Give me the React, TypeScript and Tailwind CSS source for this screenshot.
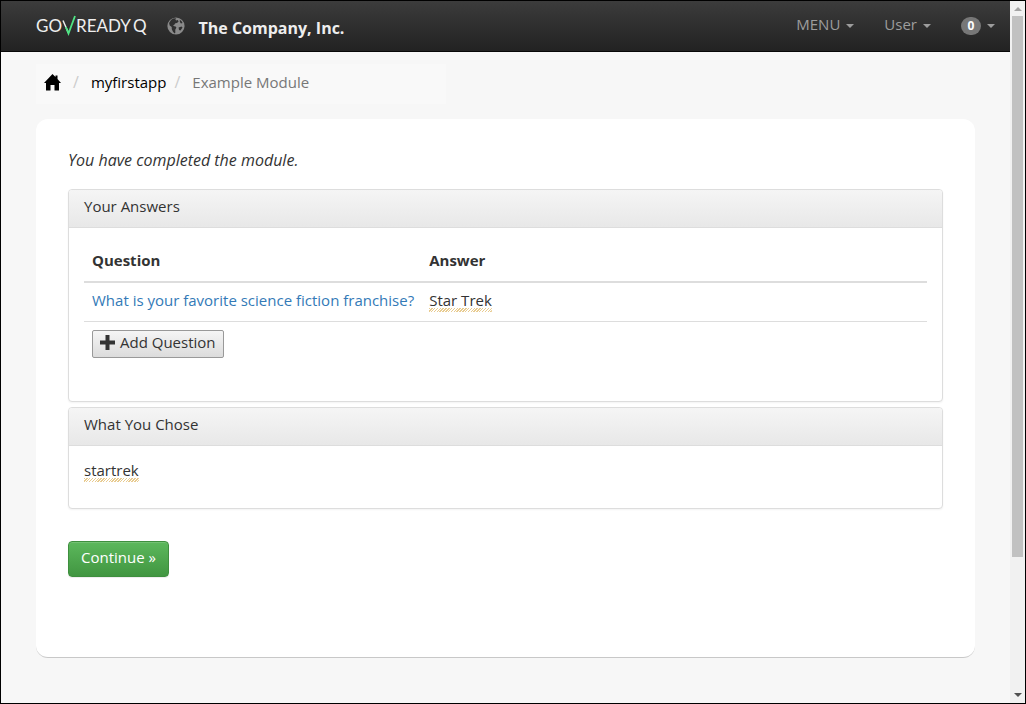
import type { ReactNode } from "react";

const hatch =
  "pb-0.5 bg-[repeating-linear-gradient(135deg,#e8cb90_0px,#e8cb90_1px,#ffffff_1px,#ffffff_2px)] bg-[length:100%_4px] bg-bottom bg-no-repeat";

function Caret() {
  return (
    <span
      aria-hidden="true"
      className="ml-1.5 h-0 w-0 border-x-4 border-t-4 border-x-transparent border-t-[#9d9d9d]"
    />
  );
}

function Logo() {
  return (
    <span className="flex items-center font-[Lato] text-[17px] leading-5 text-[#eeeeee]">
      GO
      <svg width="15" height="22" viewBox="0 0 15 22" fill="none" className="-mr-px" aria-label="V">
        <path d="M1 5.500 6.500 18" stroke="#eeeeee" strokeWidth="1.500" />
        <path d="M3.800 12 6.500 18.500 13 1" stroke="#4fe584" strokeWidth="1.800" />
      </svg>
      READY<span className="ml-0.5">Q</span>
    </span>
  );
}

function Globe() {
  return (
    <svg width="18" height="18" viewBox="0 0 18 18" aria-hidden="true">
      <circle cx="9" cy="9" r="8.6" fill="#8a8a8a" />
      <path
        d="M6.200 1.500 9.300 1.300 8.300 2.500 9.200 3.500 10.800 3 11.600 4.600 10 6 8.300 6.200 7.300 7.700 6 8.300 7.300 9.200 8.600 9.400 9.400 10.600 8.300 12.800 8.300 15.800 7.600 16.400 6 14.800 4.800 12.200 4.700 10 2.700 8.600 2.100 6 4 3Z M12.800 2.700 14.400 4 15.600 6 14 6.600 12.900 5Z M11.600 10.500 14.500 9.600 15.500 10.500 13.500 13.500 12 13Z"
        fill="#2f2f2f"
      />
    </svg>
  );
}

function Home() {
  return (
    <svg width="17" height="17" viewBox="0 0 17 17" aria-hidden="true">
      <path d="M8.500 0 11.500 3V1.500h2V5L17 9h-2v7.500h-4.500V11h-4v5.500H2V9H0Z" fill="#000000" />
    </svg>
  );
}

function Plus() {
  return (
    <svg width="15" height="15" viewBox="0 0 15 15" aria-hidden="true">
      <path d="M5.500 0h4v5.500H15v4H9.500V15h-4V9.500H0v-4h5.500Z" fill="#333333" />
    </svg>
  );
}

function Panel({ title, children }: { title: string; children: ReactNode }) {
  return (
    <section className="overflow-hidden rounded border border-[#dddddd] bg-white shadow-[0_1px_2px_rgba(0,0,0,0.05)]">
      <h2 className="border-b border-[#dddddd] bg-linear-to-b from-[#f5f5f5] to-[#e8e8e8] px-[15px] pt-1.5 pb-2.5 leading-[21px]">
        {title}
      </h2>
      {children}
    </section>
  );
}

export default function App() {
  return (
    <div className="flex h-screen overflow-hidden border border-black bg-[#f7f7f7] font-['Open_Sans',sans-serif] text-[15px] text-[#333333]">
      <div className="min-w-0 flex-1">
        <header className="flex h-[51px] items-center border-b border-[#080808] bg-linear-to-b from-[#3c3c3c] to-[#222222] pl-[35px]">
          <a href="#home" className="flex items-center">
            <Logo />
          </a>
          <a href="#company" className="ml-5 flex items-center gap-3.5 text-base font-bold text-[#eeeeee]">
            <Globe />
            <span className="pt-1">The Company, Inc.</span>
          </a>
          <nav className="ml-auto flex text-[#9d9d9d]">
            <button className="flex items-center px-[15px]">
              <span className="pb-1">MENU</span>
              <Caret />
            </button>
            <button className="flex items-center px-[15px]">
              <span className="pb-1">User</span>
              <Caret />
            </button>
            <button className="flex items-center px-[15px]" aria-label="Notifications">
              <span className="flex h-[18px] w-5 items-center justify-center rounded-full bg-[#777777] text-xs font-bold text-white">
                0
              </span>
              <Caret />
            </button>
          </nav>
        </header>

        <main className="px-[35px] pt-3">
          <nav aria-label="Breadcrumb" className="max-w-[410px] bg-[#f9f9f9]">
            <ol className="flex h-10 items-center gap-3 px-2 pb-1">
              <li>
                <a href="#home" aria-label="Home">
                  <Home />
                </a>
              </li>
              <li aria-hidden="true" className="text-base text-[#cccccc]">/</li>
              <li>
                <a href="#app" className="text-black">myfirstapp</a>
              </li>
              <li aria-hidden="true" className="-ml-1 text-base text-[#cccccc]">/</li>
              <li className="text-[#777777]">Example Module</li>
            </ol>
          </nav>

          <div className="mt-[15px] h-[539px] rounded-xl border-b border-[#c8c8c8] bg-white px-8 pt-[31px]">
            <p className="mb-[19px] text-base leading-5 italic">You have completed the module.</p>
            <div className="flex flex-col gap-[5px]">
              <Panel title="Your Answers">
                <div className="px-[15px] pt-[15px] pb-[43px]">
                  <table className="w-full border-collapse text-left">
                    <thead>
                      <tr className="border-b-2 border-[#dddddd]">
                        <th className="w-2/5 px-2 pt-1.5 pb-2.5 leading-[22px]">Question</th>
                        <th className="px-2 pt-1.5 pb-2.5 leading-[22px]">Answer</th>
                      </tr>
                    </thead>
                    <tbody>
                      <tr className="border-b border-[#dddddd]">
                        <td className="py-0 pt-1.5 pb-2.5 pl-2 leading-[22px] whitespace-nowrap">
                          <a href="#question" className="text-[#337ab7]">
                            What is your favorite science fiction franchise?
                          </a>
                        </td>
                        <td className="px-2 pt-1.5 pb-2.5 leading-[22px]">
                          <span className={hatch}>Star Trek</span>
                        </td>
                      </tr>
                    </tbody>
                  </table>
                  <button className="mt-2 ml-2 flex h-7 items-center gap-[5px] rounded-xs border border-[#999999] bg-linear-to-b from-[#f5f5f5] to-[#dcdcdc] px-[7px] pb-1">
                    <Plus />
                    Add Question
                  </button>
                </div>
              </Panel>
              <Panel title="What You Chose">
                <p className="px-[15px] pt-[13px] pb-[27px] leading-[22px]">
                  <span className={hatch}>startrek</span>
                </p>
              </Panel>
            </div>
            <button className="mt-8 flex h-9 items-center rounded border border-[#3e8f3e] bg-linear-to-b from-[#5cb85c] to-[#419641] px-3 pb-1 text-white shadow-[inset_0_1px_0_rgba(255,255,255,0.15),0_1px_1px_rgba(0,0,0,0.075)]">
              Continue »
            </button>
          </div>
        </main>
      </div>

      <div aria-hidden="true" className="flex w-[15px] flex-col items-center bg-[#f1f1f1]">
        <span className="mt-1.5 border-x-4 border-b-4 border-x-transparent border-b-[#a3a3a3]" />
        <span className="mt-[5px] h-[77%] w-[11px] bg-[#c1c1c1]" />
        <span className="mt-auto mb-1.5 border-x-4 border-t-4 border-x-transparent border-t-[#505050]" />
      </div>
    </div>
  );
}
